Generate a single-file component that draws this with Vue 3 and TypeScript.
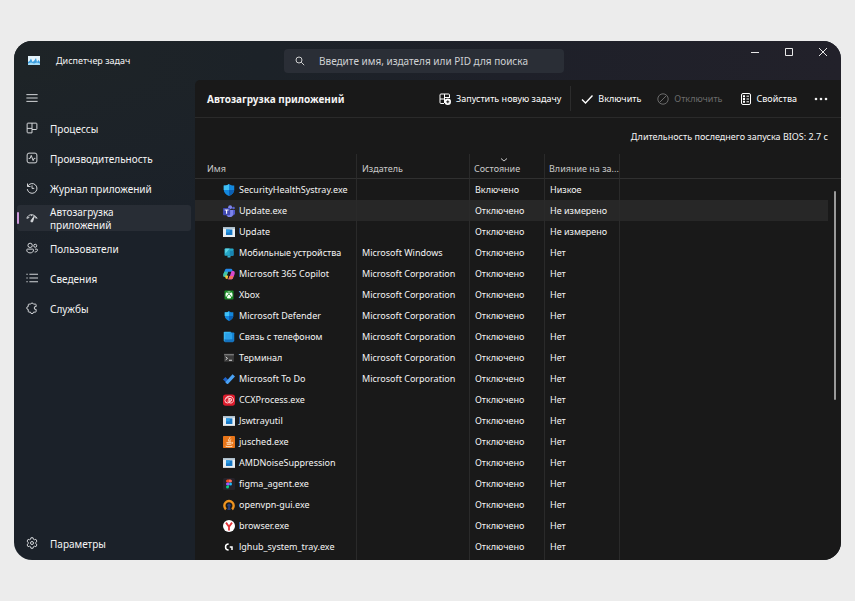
<script setup lang="ts">
import { ref } from 'vue'

interface NavItem {
  label: string
  icon: string
}

interface StartupApp {
  name: string
  icon: string
  publisher: string
  status: string
  impact: string
}

const lineIcons: Record<string, string> = {
  processes:
    '<path d="M1.500 2.500a1 1 0 0 1 1-1h11a1 1 0 0 1 1 1v6.500a1 1 0 0 1-1 1H8v4.500H2.500a1 1 0 0 1-1-1zM8 1.500V10M1.500 8.500H8"/>',
  performance:
    '<rect x="1.500" y="1.500" width="13" height="13" rx="2.500"/><path d="M3.500 8.500h2l1.500-4 2.500 7 1.300-3h1.700"/>',
  history:
    '<path d="M2 2v4h4M2.300 5.700A6.500 6.500 0 1 1 1.700 9.500M8 4.500v4h3"/>',
  startup:
    '<path d="M1 8.500C3 2.500 10.500 1.500 15 8.500M1.500 8.500l3-1.500M14 8.500l-2.500-1.500M7.500 3.500v2"/><path fill="#d8dadd" d="M11 5.500 6.600 11.800a1.300 1.300 0 0 0 2.200 1.200z"/>',
  users:
    '<circle cx="5.500" cy="4.500" r="2.900"/><circle cx="12.300" cy="5" r="2"/><path d="M1 10.500a1 1 0 0 1 1-1h7a1 1 0 0 1 1 1c0 2.700-1.800 4-4.500 4S1 13.200 1 10.500zM12 9.500h2.500a.8.8 0 0 1 .8.800c0 2-1.300 3.200-3.800 3"/>',
  details:
    '<path d="M4.500 3H16M4.500 8H16M4.500 13H16M.500 3h1.800M.500 8h1.800M.500 13h1.800"/>',
  services:
    '<path d="M13.500 9.800v2.700a1 1 0 0 1-1 1H10a2 2 0 0 1-4 0H4a1 1 0 0 1-1-1V10a2 2 0 0 1 0-4V3.800a1 1 0 0 1 1-1h2.200a2 2 0 0 1 3.800 0h2.500a1 1 0 0 1 1 1V6.200a1.900 1.900 0 1 0 0 3.600z"/>',
  settings:
    '<path d="M6.600 1h2.800l.5 2 1.300.7 2-.6 1.400 2.500-1.500 1.400v2l1.500 1.400-1.400 2.500-2-.6-1.300.7-.5 2H6.600l-.5-2-1.300-.7-2 .6-1.400-2.500L2.900 9V7L1.400 5.600l1.400-2.500 2 .6L6.100 3z"/><circle cx="8" cy="8" r="2"/>',
}

const windowsApp =
  '<path fill="#e8edf1" d="M0 1.500h16v13H0z"/><path fill="#a9bccb" d="M0 1.500h16v2H0z"/><path fill="#1777c4" d="M4 4.500h8.500v7.500H4z"/><path fill="#2b9be4" d="M4 4.500h5v4H4z"/>'

const shield =
  '<path fill="#1387dd" d="M8 0c2 1.500 4 2 7 2v5.500c0 4-3 6.500-7 8.500-4-2-7-4.500-7-8.500V2c3 0 5-.5 7-2z"/><path fill="#40c0f4" d="M8 0v8H1V2c3 0 5-.5 7-2z"/><path fill="#0b5fb4" d="M8 8h7c-.2 3.900-3.200 6.100-7 8z"/>'

const appIcons: Record<string, string> = {
  security: shield,
  defender: `<g transform="translate(1.500 1.500) scale(.82)">${shield}</g>`,
  windows: windowsApp,
  teams:
    '<circle cx="9.500" cy="3" r="2.600" fill="#7b83eb"/><circle cx="14" cy="4" r="1.800" fill="#5b62c9"/><path fill="#5059c9" d="M9 6.500h7v4.500a3 3 0 0 1-4 2.800z"/><path fill="#7b83eb" d="M4.500 6.500h9v5a4.500 4.500 0 0 1-9 0z"/><rect y="4" width="9.500" height="9.500" rx="1" fill="#4149b0"/><path stroke="#fff" stroke-width="1.500" d="M2.200 6.700h5.200M4.800 6.700v4.800"/>',
  mobile:
    '<rect x="2" y="2" width="12" height="9.500" rx="1" fill="#25a8c8"/><path fill="#5fd3e2" d="M3 2h6L3 9z"/><path fill="#1985b4" d="M9 5h5v6.500H9z"/><path fill="#3aaed0" d="M6 11.500h4V14H6z"/>',
  copilot:
    '<path fill="#2389e9" d="M5 1h5.500c2 0 2 2 2.700 4H7L4 12H2.500C0 12 0 9.500.7 7.500L2.500 3C3 1.500 4 1 5 1z"/><path fill="#43c59e" d="M2 5h4.500L4.500 12H2.500C0 12 0 9.500.7 7.500z"/><path fill="#f4c63a" d="M3 10h4l-1 4.500C4.500 15 3 14 3 12z"/><path fill="#d949cb" d="M11.500 4h2c2.500 0 2.500 2.500 1.800 4.500L13.500 13c-.5 1.500-1.500 2-2.500 2H6c1.500 0 2-1 2.500-2.500z"/><path fill="#f46a5e" d="M8.500 10.500H14L13.300 13c-.5 1.500-1.300 2-2.300 2H6c1.500 0 2-2.500 2.500-4.500z"/><path fill="#191919" d="M7.500 6h1.500l-1 4H6.300z"/>',
  xbox:
    '<rect x="2" y="2" width="12" height="12" rx="1" fill="#188a24"/><circle cx="8" cy="8" r="4.700" fill="#f1fff1"/><path d="M4.500 12c.4-2.500 2-4.300 3.500-5.500 1.500 1.200 3.100 3 3.500 5.500M5 4.200c1.200 0 2 .6 3 1.400 1-.8 1.800-1.400 3-1.400" fill="none" stroke="#188a24" stroke-width="1.300"/>',
  phone:
    '<rect x="1" y="1" width="10" height="13" rx="1" fill="#3ab8f2"/><path fill="#1584d4" d="M9 2h5a1 1 0 0 1 1 1v10a1 1 0 0 1-1 1H9z"/><path fill="#1572be" d="M2 11h12v3a1 1 0 0 1-1 1H3a1 1 0 0 1-1-1z"/><path fill="#2ba0e8" d="M3 3h9v8H3z"/>',
  terminal:
    '<path fill="#3d3d3d" d="M1.500 3h13v10h-13z"/><path fill="#777" d="M1.500 2.500h13v2h-13z"/><path d="m3.500 6.500 2.500 2-2.500 2M8 11h4" fill="none" stroke="#ddd" stroke-width="1.300"/>',
  todo:
    '<path fill="#1f63c8" d="m0 8.500 3.200-3.200L9 11l-3.200 3.300z"/><path fill="#4ba3f5" d="M12.700 1.500 16 4.800 6.900 14.300a1.400 1.400 0 0 1-1.900 0l-1.900-2z"/>',
  adobe:
    '<rect width="16" height="15" y=".5" rx="3.500" fill="#dc1b2c"/><g fill="none" stroke="#ffdede" stroke-width="1.300"><circle cx="6" cy="8.500" r="3.500"/><path d="M3.500 5.500c2-3 7-3.500 9.500-.5 2 2.800 1 6.800-2.500 7-2.500 0-3.500-1.500-4.500-3"/><circle cx="9.500" cy="7.800" r="2"/></g>',
  java:
    '<rect width="16" height="16" rx="1" fill="#e87519"/><path d="M9 1.500c1.500 2-3.500 3-1 6M11 4.500c-2 1.200-2.300 1.800-1.300 3.500M4.500 9h6.500M5 11h5.500M3.500 13.500c2.500 1 6.500 1 9 0M11.500 8.500c2-.5 2 1.700-.2 2" fill="none" stroke="#fff1dc" stroke-width="1.200"/>',
  figma:
    '<rect width="16" height="16" rx="2" fill="#25222a"/><path fill="#f24e1e" d="M8 2H6a2 2 0 0 0 0 4h2z"/><path fill="#ff7262" d="M8 2h2a2 2 0 0 1 0 4H8z"/><path fill="#a259ff" d="M8 6H6a2 2 0 0 0 0 4h2z"/><circle cx="10" cy="8" r="2" fill="#1abcfe"/><path fill="#0acf83" d="M8 10H6a2 2 0 1 0 2 2z"/>',
  openvpn:
    '<path d="M4 13.700a6.200 6.200 0 1 1 8 0" fill="none" stroke="#ee9420" stroke-width="3.200"/><circle cx="8" cy="8.200" r="2.300" fill="#243c78"/><path fill="#243c78" d="m7 9.500-1.200 5h4.400L9 9.500z"/>',
  yandex:
    '<circle cx="8" cy="8" r="8" fill="#fff"/><path d="m4 3.500 4 5.500 4-5.500M8 8.500V14" fill="none" stroke="#e33237" stroke-width="2.400"/>',
  logitech:
    '<path d="M7.500 4C2 4 2 12 7.500 12M9 8h3v4" fill="none" stroke="#fff" stroke-width="2"/>',
}

const navItems: NavItem[] = [
  { label: 'Процессы', icon: 'processes' },
  { label: 'Производительность', icon: 'performance' },
  { label: 'Журнал приложений', icon: 'history' },
  { label: 'Автозагрузка приложений', icon: 'startup' },
  { label: 'Пользователи', icon: 'users' },
  { label: 'Сведения', icon: 'details' },
  { label: 'Службы', icon: 'services' },
]

const app = (
  name: string,
  icon: string,
  publisher = '',
  impact = 'Нет',
  status = 'Отключено',
): StartupApp => ({ name, icon, publisher, impact, status })

const ms = 'Microsoft Corporation'

const apps: StartupApp[] = [
  app('SecurityHealthSystray.exe', 'security', '', 'Низкое', 'Включено'),
  app('Update.exe', 'teams', '', 'Не измерено'),
  app('Update', 'windows', '', 'Не измерено'),
  app('Мобильные устройства', 'mobile', 'Microsoft Windows'),
  app('Microsoft 365 Copilot', 'copilot', ms),
  app('Xbox', 'xbox', ms),
  app('Microsoft Defender', 'defender', ms),
  app('Связь с телефоном', 'phone', ms),
  app('Терминал', 'terminal', ms),
  app('Microsoft To Do', 'todo', ms),
  app('CCXProcess.exe', 'adobe'),
  app('Jswtrayutil', 'windows'),
  app('jusched.exe', 'java'),
  app('AMDNoiseSuppression', 'windows'),
  app('figma_agent.exe', 'figma'),
  app('openvpn-gui.exe', 'openvpn'),
  app('browser.exe', 'yandex'),
  app('lghub_system_tray.exe', 'logitech'),
]

const activeNav = ref(3)
const selectedRow = ref(1)
const query = ref('')
</script>

<template>
  <div class="desktop">
    <div class="window">
      <header class="titlebar">
        <div class="brand">
          <svg class="brand-icon" viewBox="0 0 12 10" aria-hidden="true">
            <path fill="#e4f3fb" d="M0 0h12v9H0z" />
            <path fill="#3c9fe0" d="M0 9V6l1.500-1L3 2.500 4.500 6 6 5l2-3 1 4 1.500-2L12 6v3z" />
            <path fill="#a6dcf7" d="M0 9V7.500l3-1 3 1 3-1 3 1V9z" />
          </svg>
          <h1 class="brand-name">Диспетчер задач</h1>
        </div>
        <label class="search">
          <svg class="search-icon" viewBox="0 0 10 10" aria-hidden="true">
            <circle cx="4" cy="4" r="3" />
            <path d="m6.200 6.200 3 3" />
          </svg>
          <input
            v-model="query"
            class="search-input"
            type="text"
            aria-label="Поиск"
            placeholder="Введите имя, издателя или PID для поиска"
          />
        </label>
        <div class="controls">
          <button class="control" type="button" aria-label="Свернуть">
            <svg viewBox="0 0 10 10"><path d="M1 5.500h8" /></svg>
          </button>
          <button class="control" type="button" aria-label="Развернуть">
            <svg viewBox="0 0 10 10"><path d="M1.500 1.500h7v7h-7z" /></svg>
          </button>
          <button class="control" type="button" aria-label="Закрыть">
            <svg viewBox="0 0 10 10"><path d="m1 1 8 8M9 1 1 9" /></svg>
          </button>
        </div>
      </header>

      <nav class="sidebar">
        <button class="nav-item" type="button" aria-label="Меню">
          <svg class="nav-icon" viewBox="0 0 16 16"><path d="M.5 3.500h15M.5 8h15M.5 12.500h15" /></svg>
        </button>
        <button
          v-for="(item, i) in navItems"
          :key="item.icon"
          type="button"
          class="nav-item"
          :class="{ active: i === activeNav }"
          @click="activeNav = i"
        >
          <svg class="nav-icon" viewBox="0 0 16 16" aria-hidden="true" v-html="lineIcons[item.icon]" />
          <span class="nav-label">{{ item.label }}</span>
        </button>
        <button class="nav-item nav-settings" type="button">
          <svg class="nav-icon" viewBox="0 0 16 16" aria-hidden="true" v-html="lineIcons.settings" />
          <span class="nav-label">Параметры</span>
        </button>
      </nav>

      <main class="content">
        <div class="toolbar">
          <h2 class="page-title">Автозагрузка приложений</h2>
          <button class="tool tool-run" type="button">
            <svg class="tool-icon" viewBox="0 0 12 12" aria-hidden="true">
              <path d="M5 10.500H2a1 1 0 0 1-1-1V2a1 1 0 0 1 1-1h7.500a1 1 0 0 1 1 1v3M5.500 1v9M1 6h4.500M5.500 4.500h5" />
              <circle cx="8.800" cy="8.800" r="3.200" class="solid" />
              <path d="M7.300 8.800h3M8.800 7.300v3" class="cut" />
            </svg>
            Запустить новую задачу
          </button>
          <button class="tool tool-enable" type="button">
            <svg class="tool-icon" viewBox="0 0 12 12" aria-hidden="true">
              <path class="check" d="m1 6.500 3.500 3.500 7-7.500" />
            </svg>
            Включить
          </button>
          <button class="tool tool-disable" type="button" disabled>
            <svg class="tool-icon" viewBox="0 0 12 12" aria-hidden="true">
              <circle cx="6" cy="6" r="5.200" />
              <path d="m2.400 9.600 7.200-7.200" />
            </svg>
            Отключить
          </button>
          <button class="tool tool-props" type="button">
            <svg class="tool-icon" viewBox="0 0 12 12" aria-hidden="true">
              <rect x="1.500" y=".5" width="9" height="11" rx="1.500" />
              <path d="M6.500 3.200h2.500M6.500 6h2.500M6.500 8.800h2.500" />
              <path d="M3 3.200h2M3 6h2M3 8.800h2" class="thick" />
            </svg>
            Свойства
          </button>
          <button class="more" type="button" aria-label="Дополнительно">
            <svg viewBox="0 0 14 4">
              <circle cx="2" cy="2" r="1.300" /><circle cx="7" cy="2" r="1.300" /><circle cx="12" cy="2" r="1.300" />
            </svg>
          </button>
        </div>

        <p class="bios">Длительность последнего запуска BIOS: 2.7 с</p>

        <div class="table-area">
          <table class="apps">
            <colgroup>
              <col class="col-name" />
              <col class="col-publisher" />
              <col class="col-value" />
              <col class="col-value" />
              <col />
            </colgroup>
            <thead>
              <tr>
                <th scope="col">Имя</th>
                <th scope="col">Издатель</th>
                <th scope="col" aria-sort="descending">
                  <svg class="sort" viewBox="0 0 8 4" aria-hidden="true"><path d="m1 .5 3 2.500 3-2.500" /></svg>
                  Состояние
                </th>
                <th scope="col">Влияние на за...</th>
                <td></td>
              </tr>
            </thead>
            <tbody>
              <tr
                v-for="(row, i) in apps"
                :key="i"
                :class="{ selected: i === selectedRow }"
                @click="selectedRow = i"
              >
                <td>
                  <span class="app">
                    <svg class="app-icon" viewBox="0 0 16 16" aria-hidden="true" v-html="appIcons[row.icon]" />
                    {{ row.name }}
                  </span>
                </td>
                <td>{{ row.publisher }}</td>
                <td>{{ row.status }}</td>
                <td>{{ row.impact }}</td>
                <td></td>
              </tr>
            </tbody>
          </table>
          <div class="scroll" aria-hidden="true"><div class="thumb"></div></div>
        </div>
      </main>
    </div>
  </div>
</template>

<style>
body {
  background: #ececec;
}
</style>

<style scoped>
* {
  box-sizing: border-box;
}

.desktop {
  min-height: 100vh;
  display: grid;
  padding: 41px 14px;
  font-family: 'Noto Sans', 'Open Sans', sans-serif;
  font-size: 9px;
  color: #f4f4f4;
}

.window {
  display: grid;
  grid-template: 39px 1fr / 181px 1fr;
  overflow: hidden;
  border-radius: 18px;
  background: linear-gradient(165deg, #1e2427 0%, #1b2129 30%);
}

button {
  border: 0;
  padding: 0;
  background: none;
  color: inherit;
  font: inherit;
}

svg {
  display: block;
  flex: none;
}

.titlebar {
  grid-column: 1 / -1;
  display: grid;
  grid-template-columns: 270px 280px 1fr;
  align-items: center;
  background: linear-gradient(90deg, #1e2427 0%, #1c2228 30%, #1e2029 60%, #22212a 100%);
}

.brand {
  display: flex;
  align-items: center;
  gap: 16px;
  padding-left: 14px;
}

.brand-icon {
  width: 12px;
  height: 10px;
}

.brand-name {
  margin: 0;
  font-size: 9px;
  font-weight: 400;
}

.search {
  display: flex;
  align-items: center;
  gap: 14px;
  height: 24px;
  padding: 0 11px;
  border-radius: 4px;
  background: #2a2e36;
}

.search-icon {
  width: 10px;
  height: 10px;
  fill: none;
  stroke: #d0d0d0;
}

.search-input {
  flex: 1;
  min-width: 0;
  border: 0;
  padding: 0;
  outline: 0;
  background: none;
  color: #f0f0f0;
  font: inherit;
  font-size: 10px;
}

.search-input::placeholder {
  color: #cfd1d4;
  opacity: 1;
}

.controls {
  display: flex;
  align-self: start;
  justify-content: flex-end;
  gap: 24px;
  padding: 6px 13px 0 0;
}

.control svg {
  width: 10px;
  height: 10px;
  fill: none;
  stroke: #e8e8e8;
}

.sidebar {
  display: flex;
  flex-direction: column;
  gap: 4px;
  padding: 5px 4px 4px 3px;
}

.nav-item {
  position: relative;
  display: flex;
  align-items: center;
  gap: 12px;
  height: 26px;
  padding: 0 60px 0 9px;
  border-radius: 3px;
  text-align: left;
  font-size: 10px;
  line-height: 13px;
  white-space: nowrap;
}

.nav-label {
  padding-top: 2px;
}

.nav-item.active {
  background: #282d35;
  white-space: normal;
}

.nav-item.active::before {
  content: '';
  position: absolute;
  left: 0;
  top: 7px;
  width: 2px;
  height: 12px;
  border-radius: 1px;
  background: #cf9bdc;
}

.nav-icon {
  width: 12px;
  height: 12px;
  fill: none;
  stroke: #d8dadd;
  stroke-width: 1.3;
}

.nav-settings {
  margin-top: auto;
}

.content {
  min-width: 0;
  display: flex;
  flex-direction: column;
  border-top-left-radius: 5px;
  background: #191919;
}

.toolbar {
  display: flex;
  align-items: center;
  height: 38px;
  padding: 0 13px 0 12px;
  border-bottom: 1px solid #2a2a2a;
}

.page-title {
  margin: 0 auto 0 0;
  font-size: 10px;
  font-weight: 700;
}

.tool {
  display: flex;
  align-items: center;
  gap: 5px;
  height: 25px;
  color: #fff;
  white-space: nowrap;
}

.tool-run {
  padding-right: 9px;
  border-right: 1px solid #2c2c2c;
}

.tool-enable {
  padding: 0 16px 0 10px;
}

.tool-disable {
  padding-right: 17px;
  color: #6c6c6c;
}

.tool-props {
  padding-right: 17px;
}

.tool-icon {
  width: 12px;
  height: 12px;
  fill: none;
  stroke: currentColor;
}

.tool-icon .solid {
  fill: currentColor;
  stroke: none;
}

.tool-icon .cut {
  stroke: #191919;
}

.tool-icon .thick {
  stroke-width: 2;
}

.tool-icon .check {
  stroke-width: 1.4;
}

.more svg {
  width: 14px;
  height: 4px;
  fill: #f0f0f0;
}

.bios {
  margin: 0;
  padding: 2px 13px 0 0;
  text-align: right;
  line-height: 34px;
}

.table-area {
  flex: 1;
  display: grid;
  grid-template-columns: 1fr 13px;
}

.apps {
  width: 100%;
  align-self: start;
  table-layout: fixed;
  border-collapse: separate;
  border-spacing: 0;
}

.col-name {
  width: 162px;
}

.col-publisher {
  width: 113px;
}

.col-value {
  width: 75px;
}

.apps th,
.apps td {
  height: 21px;
  padding: 0 0 0 5px;
  border-right: 1px solid #2a2a2a;
  text-align: left;
  font-weight: 400;
  line-height: 12px;
  white-space: nowrap;
}

.apps th:first-child {
  padding-left: 12px;
}

.apps td:first-child {
  padding-left: 28px;
}

.apps td:last-child {
  border-right: 0;
}

.apps thead th,
.apps thead td {
  position: relative;
  height: 25px;
  padding-top: 6px;
  padding-left: 4px;
  border-bottom: 1px solid #303030;
  color: #c9c9c9;
}

.apps thead th:first-child {
  padding-left: 12px;
}

.apps thead th:nth-child(2) {
  padding-left: 5px;
}

.sort {
  position: absolute;
  top: 4px;
  left: 50%;
  width: 8px;
  height: 4px;
  margin-left: -7px;
  fill: none;
  stroke: #c9c9c9;
}

.apps tbody tr:last-child td {
  padding-bottom: 3px;
  height: 24px;
}

.selected td {
  background: #272727;
}

.app {
  display: flex;
  align-items: center;
  gap: 4px;
}

.app-icon {
  width: 12px;
  height: 12px;
}

.scroll {
  display: flex;
  flex-direction: column;
  align-items: center;
}

.scroll::before {
  content: '';
  width: 100%;
  height: 24px;
  margin-bottom: 12px;
  border-bottom: 1px solid #303030;
}

.thumb {
  width: 2px;
  height: 209px;
  border-radius: 1px;
  background: #9a9a9a;
}
</style>
